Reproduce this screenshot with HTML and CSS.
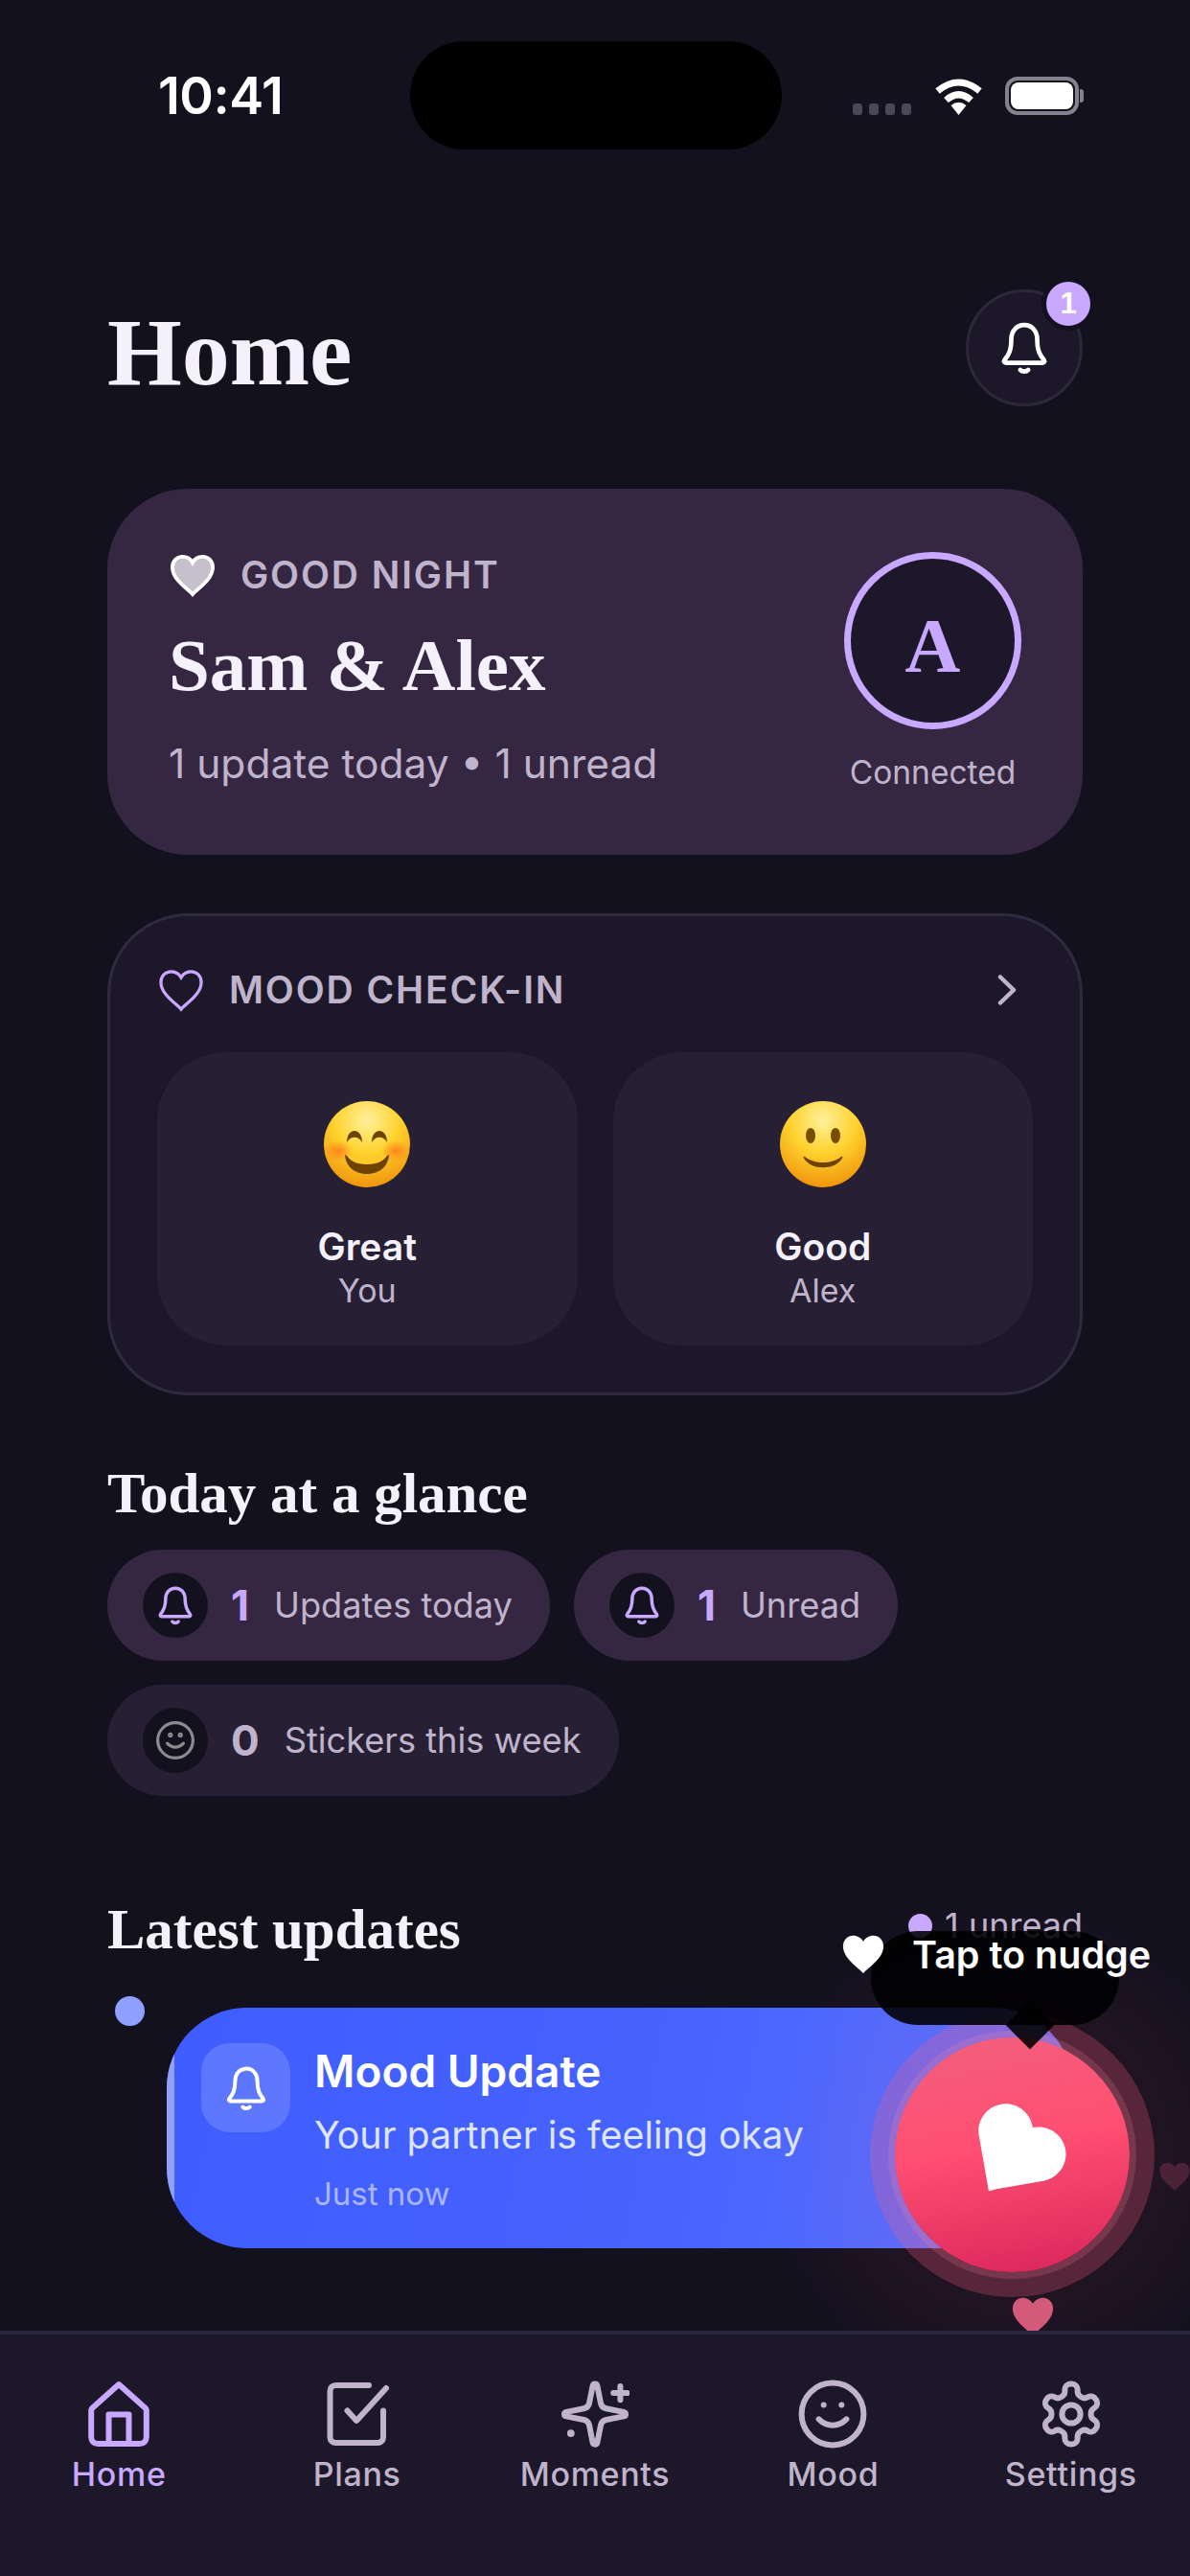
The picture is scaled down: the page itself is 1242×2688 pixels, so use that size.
FILE: index.html
```html
<!DOCTYPE html>
<html lang="en">
<head>
<meta charset="utf-8">
<title>Home</title>
<link rel="stylesheet" href="styles.css">
</head>
<body>
<svg class="defs" width="0" height="0" aria-hidden="true">
  <defs>
    <symbol id="bell" viewBox="0 0 24 24">
      <path d="M12 1.8c-3.5 0-5.8 2.8-5.8 6.4 0 5-1.2 7-3 9.2-.5.7-.1 1.3.6 1.3h16.400c.7 0 1.100-.6.6-1.300-1.800-2.200-3-4.200-3-9.200 0-3.600-2.300-6.400-5.800-6.400z"/>
      <path d="M10.200 21.800c.9 1 2.700 1 3.600 0"/>
    </symbol>
    <symbol id="heart" viewBox="0 0 24 24">
      <path d="M12 22.500C9.500 19.500 1 14.500 1 7.800 1 4.300 3.600 2 6.500 2 8.800 2 10.900 3.200 12 5.200 13.100 3.200 15.200 2 17.500 2 20.400 2 23 4.300 23 7.800c0 6.700-8.500 11.700-11 14.700z"/>
    </symbol>
    <symbol id="smile" viewBox="0 0 24 24">
      <circle cx="12" cy="12" r="10.500"/>
      <path d="M7.200 13.800c2.800 3 6.800 3 9.600 0"/>
      <circle class="eye" cx="9" cy="8.800" r=".6"/>
      <circle class="eye" cx="15" cy="8.800" r=".6"/>
    </symbol>
    <radialGradient id="face" cx="50%" cy="22%" r="85%">
      <stop offset="0" stop-color="#fff09a"/>
      <stop offset=".45" stop-color="#ffd22e"/>
      <stop offset="1" stop-color="#ee8a06"/>
    </radialGradient>
    <radialGradient id="blush" cx="50%" cy="50%" r="50%">
      <stop offset="0" stop-color="#ff7a1e" stop-opacity=".85"/>
      <stop offset="1" stop-color="#ff7a1e" stop-opacity="0"/>
    </radialGradient>
  </defs>
</svg>

<div class="page">
  <header class="status">
    <span class="time">10:41</span>
    <span class="island"></span>
    <div class="status-right">
      <span class="signal"><i></i><i></i><i></i><i></i></span>
      <svg class="wifi" viewBox="0 0 51 38" width="51" height="38">
        <path class="wifi-arc" d="M3.500 13Q25.500-5 47.500 13"/>
        <path class="wifi-arc" d="M12.500 22.500Q25.500 11 38.500 22.500"/>
        <path class="wifi-dot" d="M25.500 38 17.500 28Q25.500 21.500 33.500 28Z"/>
      </svg>
      <span class="battery"><b></b></span>
    </div>
  </header>

  <main class="main">
    <div class="top">
      <h1 class="page-title">Home</h1>
      <button class="bell-btn" type="button">
        <svg class="ico ico-bell-top"><use href="#bell"/></svg>
        <span class="badge">1</span>
      </button>
    </div>

    <section class="hero">
      <div class="hero-left">
        <div class="eyebrow">
          <svg class="hero-heart"><use href="#heart"/></svg>
          <span>GOOD NIGHT</span>
        </div>
        <h2 class="hero-name">Sam &amp; Alex</h2>
        <p class="hero-sub">1 update today • 1 unread</p>
      </div>
      <div class="hero-right">
        <div class="avatar">A</div>
        <div class="connected">Connected</div>
      </div>
    </section>

    <section class="mood">
      <div class="mood-head">
        <svg class="mood-heart"><use href="#heart"/></svg>
        <span class="mood-label">MOOD CHECK-IN</span>
        <svg class="chev" viewBox="0 0 20 32" width="20" height="32"><path d="M3 2.500 17 16 3 29.500"/></svg>
      </div>
      <div class="mood-grid">
        <div class="mood-card">
          <svg class="emoji" viewBox="0 0 90 90" width="90" height="90">
            <circle cx="45" cy="45" r="45" fill="url(#face)"/>
            <ellipse cx="15" cy="52" rx="15" ry="11" fill="url(#blush)"/>
            <ellipse cx="75" cy="52" rx="15" ry="11" fill="url(#blush)"/>
            <path fill="#6e4300" d="M24 43c0-16 16-16 16 0-4-7-12-7-16 0zM50 43c0-16 16-16 16 0-4-7-12-7-16 0z"/>
            <path fill="#6e4300" d="M22 56c14 7 32 7 46 0-1 14-12 20-23 20S23 70 22 56z"/>
            <path fill="#ffc92c" d="M24 56c13 5 29 5 42 0-2 6-10 10-21 10s-19-4-21-10z"/>
          </svg>
          <div class="mood-name">Great</div>
          <div class="mood-who">You</div>
        </div>
        <div class="mood-card">
          <svg class="emoji" viewBox="0 0 90 90" width="90" height="90">
            <circle cx="45" cy="45" r="45" fill="url(#face)"/>
            <ellipse cx="32" cy="36" rx="5" ry="8" fill="#7a4c00"/>
            <ellipse cx="58" cy="36" rx="5" ry="8" fill="#7a4c00"/>
            <path fill="#6e4300" d="M26 58c10 8 28 8 38 0 .8-.6 1.800.3 1.200 1.200-4 7-12 10-20.200 10s-16-3-20.200-10c-.6-.9.4-1.800 1.200-1.200z"/>
          </svg>
          <div class="mood-name">Good</div>
          <div class="mood-who">Alex</div>
        </div>
      </div>
    </section>

    <h3 class="section-title glance-title">Today at a glance</h3>
    <div class="chips">
      <div class="chip chip-hot">
        <span class="chip-ico"><svg class="ico ico-chip"><use href="#bell"/></svg></span>
        <b class="chip-num">1</b>
        <span class="chip-text">Updates today</span>
      </div>
      <div class="chip chip-hot">
        <span class="chip-ico"><svg class="ico ico-chip"><use href="#bell"/></svg></span>
        <b class="chip-num">1</b>
        <span class="chip-text">Unread</span>
      </div>
      <div class="chip chip-cold">
        <span class="chip-ico"><svg class="ico ico-chip-smile"><use href="#smile"/></svg></span>
        <b class="chip-num">0</b>
        <span class="chip-text">Stickers this week</span>
      </div>
    </div>

    <div class="latest-head">
      <h3 class="section-title">Latest updates</h3>
      <span class="unread"><i></i>1 unread</span>
    </div>
    <div class="feed">
      <span class="feed-dot"></span>
      <article class="update">
        <span class="update-ico"><svg class="ico ico-update"><use href="#bell"/></svg></span>
        <div class="update-body">
          <div class="update-title">Mood Update</div>
          <div class="update-text">Your partner is feeling okay</div>
          <div class="update-time">Just now</div>
        </div>
      </article>
    </div>
  </main>

  <div class="glow"></div>
  <button class="fab" type="button">
    <svg class="fab-heart" viewBox="0 0 24 24"><path d="M12 21.800 3.500 13.300C1.200 11 1.200 7.300 3.500 5 5.800 2.700 9.700 2.700 12 5.200 14.300 2.700 18.200 2.700 20.500 5 22.800 7.300 22.800 11 20.500 13.300L13 20.800c-.5.600-.6 1-1 1z"/></svg>
  </button>
  <div class="tip">
    <svg class="tip-heart"><use href="#heart"/></svg>
    <span class="tip-text">Tap to nudge</span>
  </div>
  <svg class="float float-right"><use href="#heart"/></svg>
  <svg class="float float-bottom"><use href="#heart"/></svg>

  <nav class="nav">
    <a class="nav-item is-active">
      <svg class="nav-ico" viewBox="0 0 24 24"><path d="M12 1.700 21.300 10c.2.200.3.400.3.700V20c0 1.400-.9 2.300-2.300 2.300H4.700c-1.400 0-2.300-.9-2.300-2.300v-9.300c0-.3.100-.5.300-.7z"/><path d="M8.500 22v-9.800h7V22"/></svg>
      <span>Home</span>
    </a>
    <a class="nav-item">
      <svg class="nav-ico" viewBox="0 0 24 24"><path d="M21 10.800V20c0 1.200-.8 2-2 2H4.500c-1.200 0-2-.8-2-2V4c0-1.200.8-2 2-2H16"/><path d="m8.500 10.800 3.200 3.500L22 3"/></svg>
      <span>Plans</span>
    </a>
    <a class="nav-item">
      <svg class="nav-ico" viewBox="0 0 24 24"><path d="M12 1.500c.4 0 .7.300.8.700l1.200 6c.2 1 .9 1.700 1.900 1.900l6.100 1.200c.9.200.9 1.300 0 1.500l-6.100 1.200c-1 .2-1.700.9-1.900 1.900l-1.200 6c-.2.900-1.400.9-1.600 0l-1.200-6c-.2-1-.9-1.700-1.900-1.900l-6.100-1.200c-.9-.2-.9-1.300 0-1.500l6.100-1.200c1-.2 1.700-.9 1.900-1.900l1.200-6c.1-.4.400-.7.800-.7z"/><path d="M20.800 2.300v4.800M18.400 4.700h4.800"/><circle class="nav-dot" cx="3.600" cy="18.700" r="1.300"/></svg>
      <span>Moments</span>
    </a>
    <a class="nav-item">
      <svg class="nav-ico" viewBox="0 0 24 24"><circle cx="12" cy="12" r="10.800"/><path d="M7.200 13.800c2.800 2.800 6.800 2.800 9.600 0"/><circle class="nav-dot" cx="8.900" cy="8.800" r="1"/><circle class="nav-dot" cx="15.100" cy="8.800" r="1"/></svg>
      <span>Mood</span>
    </a>
    <a class="nav-item">
      <svg class="nav-ico" viewBox="0 0 24 24"><path d="M12.220 1.500h-.44a2 2 0 0 0-2 2v.68a2 2 0 0 1-1 1.730l-.43.250a2 2 0 0 1-2 0l-.15-.08a2 2 0 0 0-2.730.730l-.22.380a2 2 0 0 0 .730 2.730l.150.100a2 2 0 0 1 1 1.720v.510a2 2 0 0 1-1 1.740l-.150.090a2 2 0 0 0-.730 2.730l.22.380a2 2 0 0 0 2.730.730l.150-.08a2 2 0 0 1 2 0l.43.250a2 2 0 0 1 1 1.730v.680a2 2 0 0 0 2 2h.44a2 2 0 0 0 2-2v-.68a2 2 0 0 1 1-1.730l.43-.25a2 2 0 0 1 2 0l.15.080a2 2 0 0 0 2.730-.730l.22-.39a2 2 0 0 0-.73-2.730l-.15-.08a2 2 0 0 1-1-1.740v-.5a2 2 0 0 1 1-1.740l.15-.09a2 2 0 0 0 .73-2.730l-.22-.38a2 2 0 0 0-2.730-.73l-.15.080a2 2 0 0 1-2 0l-.43-.25a2 2 0 0 1-1-1.730V3.500a2 2 0 0 0-2-2z"/><circle cx="12" cy="12" r="3.200"/></svg>
      <span>Settings</span>
    </a>
  </nav>
</div>
</body>
</html>
```
FILE: styles.css
```css
* { box-sizing: border-box; }
html, body { margin: 0; padding: 0; }
body { width: 1242px; height: 2688px; overflow: hidden; background: #14111f; font-family: Inter, "Liberation Sans", sans-serif; color: #f5f1fb; }
h1, h2, h3, p { margin: 0; }
.defs { position: absolute; }
.page { position: relative; width: 1242px; height: 2688px; display: flex; flex-direction: column; overflow: hidden; }

/* status bar */
.status { position: relative; height: 200px; flex: none; display: flex; align-items: flex-start; padding: 80px 116px 0 165px; }
.time { font-size: 54px; font-weight: 600; line-height: 40px; color: #fff; letter-spacing: -.5px; }
.island { position: absolute; left: 428px; top: 43px; width: 388px; height: 113px; border-radius: 57px; background: #000; }
.status-right { margin-left: auto; display: flex; align-items: flex-end; height: 40px; }
.signal { display: flex; gap: 7px; margin-right: 24px; }
.signal i { width: 10px; height: 12px; border-radius: 3px; background: #4a4756; }
.wifi { margin-right: 23px; display: block; }
.wifi-arc { fill: none; stroke: #fff; stroke-width: 7; }
.wifi-dot { fill: #fff; }
.battery { position: relative; width: 77px; height: 40px; border: 4px solid #84828c; border-radius: 13px; padding: 2px; }
.battery b { display: block; height: 100%; background: #fff; border-radius: 8px; }
.battery::after { content: ""; position: absolute; right: -9px; top: 9px; width: 4px; height: 14px; border-radius: 0 3px 3px 0; background: #84828c; }

.main { flex: 1; min-height: 0; padding: 102px 112px 0; overflow: hidden; }

/* title row */
.top { display: flex; justify-content: space-between; align-items: center; height: 122px; }
.page-title { font: 700 100px/122px "Liberation Serif", serif; color: #f5f1fb; padding-top: 10px; }
.bell-btn { position: relative; width: 122px; height: 122px; border-radius: 50%; padding: 0; border: 3px solid #2c2839; background: #1c1829; display: flex; align-items: center; justify-content: center; }
.ico { fill: none; stroke: currentColor; stroke-linecap: round; stroke-linejoin: round; stroke-width: 2; display: block; }
.ico-bell-top { width: 56px; height: 56px; color: #fff; }
.badge { position: absolute; right: -16px; top: -16px; width: 56px; height: 56px; border-radius: 50%; border: 5px solid #14111f; background: #c9a8ff; color: #fff; font-size: 31px; font-weight: 700; line-height: 46px; text-align: center; }

/* hero */
.hero { margin-top: 86px; height: 382px; border-radius: 84px; background: #352742; padding: 66px 64px 0 66px; display: flex; justify-content: space-between; }
.eyebrow { display: flex; align-items: center; gap: 27px; height: 48px; color: #c0b4cc; font-size: 39px; font-weight: 600; letter-spacing: 1.900px; line-height: 48px; }
.hero-heart { width: 46px; height: 46px; fill: #c6c0cc; stroke: #fff; stroke-width: 2; }
.hero-name { font: 700 77px/90px "Liberation Serif", serif; margin-top: 25px; margin-left: -2px; color: #f5f1fb; }
.hero-sub { font-size: 42.500px; line-height: 56px; margin-top: 30px; margin-left: -2px; color: #c0b4cc; }
.hero-right { width: 185px; display: flex; flex-direction: column; align-items: center; }
.avatar { width: 185px; height: 185px; border-radius: 50%; border: 7px solid #c9a8ff; background: #1c1829; color: #c9a8ff; font: 700 80px/182px "Liberation Serif", serif; text-align: center; }
.connected { font-size: 33.500px; line-height: 44px; margin-top: 23px; color: #c0b4cc; white-space: nowrap; }

/* mood */
.mood { margin-top: 61px; height: 503px; border: 3px solid #2f2a40; border-radius: 84px; background: #1c1829; padding: 52px 49px 0; }
.mood-head { display: flex; align-items: center; height: 50px; padding-left: 2px; }
.mood-heart { width: 46px; height: 46px; fill: none; stroke: #c9a8ff; stroke-width: 1.700; }
.mood-label { margin-left: 27px; font-size: 39px; font-weight: 600; letter-spacing: 1.900px; line-height: 50px; color: #c0b4cc; }
.chev { margin-left: auto; margin-right: 17px; fill: none; stroke: #c0b4cc; stroke-width: 4.500; stroke-linecap: round; stroke-linejoin: round; }
.mood-grid { display: grid; grid-template-columns: 1fr 1fr; gap: 37px; margin-top: 40px; }
.mood-card { height: 306px; border-radius: 72px; background: #272034; padding-top: 51px; display: flex; flex-direction: column; align-items: center; }
.emoji { display: block; }
.mood-name { margin-top: 37px; font-size: 39px; font-weight: 600; line-height: 50px; color: #f5f1fb; }
.mood-who { font-size: 34px; line-height: 42px; color: #c0b4cc; }

/* sections */
.section-title { font: 700 59px/70px "Liberation Serif", serif; color: #f5f1fb; }
.glance-title { margin-top: 67px; }
.chips { display: flex; flex-wrap: wrap; gap: 25px; margin-top: 24px; }
.chip { height: 116px; border-radius: 58px; display: flex; align-items: center; padding: 0 39px 0 37px; }
.chip-hot { background: #352742; }
.chip-cold { background: #272034; }
.chip-ico { width: 68px; height: 68px; border-radius: 50%; background: #14111f; display: flex; align-items: center; justify-content: center; }
.ico-chip { width: 42px; height: 42px; color: #c9a8ff; stroke-width: 2; }
.ico-chip-smile { width: 42px; height: 42px; color: #8f8b90; stroke-width: 1.800; }
.ico-chip-smile .eye { fill: #8f8b90; }
.chip-num { margin-left: 24px; font-size: 44px; font-weight: 700; color: #c9a8ff; line-height: 56px; }
.chip-cold .chip-num { color: #c0b4cc; }
.chip-text { margin-left: 26px; font-size: 36.200px; line-height: 48px; color: #c0b4cc; }

.latest-head { display: flex; justify-content: space-between; align-items: flex-start; margin-top: 104px; height: 70px; }
.unread { display: flex; align-items: center; gap: 13px; font-size: 36px; line-height: 48px; color: #c0b4cc; margin-top: 7px; }
.unread i { width: 25px; height: 25px; border-radius: 50%; background: #c9a8ff; }

.feed { position: relative; margin-top: 47px; padding: 0 10px 0 62px; }
.feed-dot { position: absolute; left: 8px; top: -12px; width: 31px; height: 31px; border-radius: 50%; background: #8fa0ff; }
.update { position: relative; height: 251px; border-radius: 84px; overflow: hidden; background: linear-gradient(100deg, #3f5cff 0%, #4663ff 55%, #5a74ff 100%); display: flex; gap: 25px; padding: 37px 0 0 36px; }
.update::before { content: ""; position: absolute; left: 0; top: 0; bottom: 0; width: 8px; background: #8fa0ff; }
.update-ico { width: 93px; height: 93px; flex: none; border-radius: 30px; background: rgba(255, 255, 255, .16); display: flex; align-items: center; justify-content: center; }
.ico-update { width: 48px; height: 48px; color: #fff; }
.update-body { padding-top: 3px; }
.update-title { font-size: 46px; font-weight: 600; line-height: 52px; color: #fff; }
.update-text { margin-top: 14px; font-size: 39.400px; line-height: 54px; color: #dfe4ff; }
.update-time { margin-top: 14px; font-size: 33px; line-height: 40px; color: #aab6ff; }

/* floating nudge */
.glow { position: absolute; left: 796px; top: 1988px; width: 520px; height: 520px; border-radius: 50%; background: radial-gradient(circle, rgba(255, 70, 110, .05) 45%, rgba(255, 70, 110, 0) 70%); }
.fab { position: absolute; left: 934px; top: 2126px; width: 245px; height: 245px; padding: 0; border: 0; border-radius: 50%; background: linear-gradient(170deg, #f2607e 0%, #ff4f72 45%, #d8245a 100%); box-shadow: 0 0 0 7px rgba(255, 140, 165, .18), 0 0 0 26px rgba(255, 90, 128, .25); display: flex; align-items: center; justify-content: center; }
.fab-heart { width: 116px; height: 116px; fill: #fff; transform: translate(2px, -2px) rotate(35deg); }
.tip { position: absolute; left: 909px; top: 2015px; width: 259px; height: 98px; border-radius: 49px; background: rgba(0, 0, 0, .88); display: flex; align-items: flex-start; gap: 28px; }
.tip::after { content: ""; position: absolute; left: 148px; top: 80px; width: 36px; height: 36px; transform: rotate(45deg); background: rgba(0, 0, 0, .88); }
.tip-heart { width: 46px; height: 46px; margin: 1px 0 0 -31px; flex: none; fill: #fff; }
.tip-text { font-size: 39.500px; font-weight: 600; line-height: 50px; color: #fff; white-space: nowrap; }
.float { position: absolute; }
.float-right { left: 1209px; top: 2254px; width: 34px; height: 34px; fill: #4c2238; }
.float-bottom { left: 1055px; top: 2394px; width: 46px; height: 46px; fill: #d35a78; }

/* tab bar */
.nav { position: relative; z-index: 2; flex: none; height: 256px; border-top: 4px solid #2b2640; background: #1c1829; display: flex; padding-top: 47px; }
.nav-item { flex: 1; display: flex; flex-direction: column; align-items: center; color: #c0b4cc; font-size: 34px; font-weight: 500; line-height: 42px; letter-spacing: .7px; }
.nav-item.is-active { color: #c9a8ff; }
.nav-ico { width: 72px; height: 72px; margin-bottom: 6px; fill: none; stroke: currentColor; stroke-width: 2; stroke-linecap: round; stroke-linejoin: round; }
.nav-dot { fill: currentColor; stroke: none; }
```
